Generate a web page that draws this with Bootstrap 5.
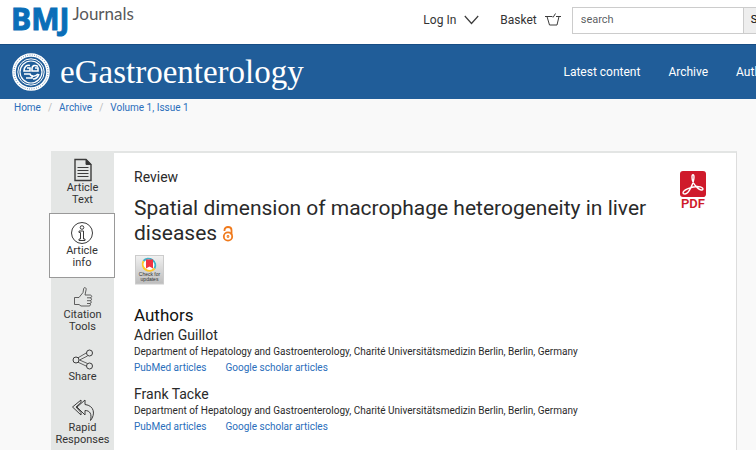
<!DOCTYPE html>
<html lang="en">
<head>
<meta charset="utf-8">
<meta name="viewport" content="width=device-width, initial-scale=1">
<title>eGastroenterology - Article info</title>
<link href="https://cdn.jsdelivr.net/npm/bootstrap@5.3.0/dist/css/bootstrap.min.css" rel="stylesheet">
<style>
body { font-family: Roboto, "Open Sans", sans-serif; background: #f9f9f9; color: #2a2a2a; font-size: 10px; line-height: 16px; }
a { color: #2a6ebb; text-decoration: none; }
svg { display: block; fill: none; stroke: #3c3c3c; flex-shrink: 0; }
.on-dark { stroke: #fff; }
.open-access { stroke: #f07a1c; }
.no-line { stroke: none; }
.brand-side { flex: 0 0 56%; padding-left: 11px; }
.topbar { min-height: 44px; }
.topbar .tool { color: #333; font-size: 12px; }
.tools { column-gap: 21px; }
.logo-mark { font: 700 30px/38px "Open Sans", sans-serif; color: #0a6eb8; -webkit-text-stroke: 1px #0a6eb8; }
.logo-sub { font: 17px/20px Lato, sans-serif; color: #58595b; padding: 4px 0 0 3px; }
.search-box { height: 27px; margin-left: -10px; }
.search-box input { width: 172px; flex: none; font-size: 11px; padding: 0 8px; border: 1px solid #ccc; border-radius: 0; }
.search-box button { background: #eee; border: 1px solid #ccc; border-left: 0; border-radius: 0; font-size: 11px; padding: 0 7px; }
.masthead { min-height: 55px; background: #205d99; border-top: 1px solid #174d84; }
.masthead a { color: #fff; font-size: 12px; }
.masthead .journal { flex: 0 0 74%; font: 33px/40px "Liberation Serif", serif; column-gap: 9px; }
.site-nav { column-gap: 28px; padding-left: 4px; }
.crumbs { --bs-breadcrumb-divider-color: #bbb; --bs-breadcrumb-item-padding-x: 7px; font-size: 10px; padding: 1px 14px 0; }
.article { margin: 35px 19px 0 49px; }
.tabs { width: 66px; position: relative; z-index: 1; margin-right: -2px; }
.tabs a { color: #333; font-size: 11px; line-height: 12px; min-height: 62px; padding-top: 7px; margin: 0 1px 0 2px; background: #e4e6e5; }
.tabs a.active { background: #fff; border: 1px solid #999; margin: 0; min-height: 65px; }
.tabs a.short { min-height: 51px; }
.tabs svg { height: 24px; }
.paper { background: #fff; border: 1px solid #ddd; border-top: 2px solid #e3e5e4; padding: 14px 20px; }
.kind { font-size: 14px; line-height: 20px; }
h1 { font-size: 21px; line-height: 25px; font-weight: 400; margin: 9px 0; }
h2 { font-size: 17px; line-height: 22px; font-weight: 400; margin: 19px 0 0; color: #111; }
h3 { font-size: 14px; line-height: 18px; font-weight: 400; margin: 0; }
.person { margin-bottom: 9px; }
.links { column-gap: 19px; }
.pdf { color: #cf1a2b; font-size: 13px; line-height: 14px; font-weight: 600; margin: 4px 10px 0; }
.tile-text { font: 5px "Liberation Sans", sans-serif; fill: #333; text-anchor: middle; }
</style>
<script src="https://cdn.jsdelivr.net/npm/bootstrap@5.3.0/dist/js/bootstrap.bundle.min.js"></script>
</head>
<body>
<div class="vh-100 d-flex flex-column overflow-hidden">
<header>
  <div class="topbar bg-white d-flex overflow-hidden">
    <div class="brand-side d-flex align-items-start">
      <a href="#" class="logo-mark">BMJ</a><a href="#" class="logo-sub">Journals</a>
    </div>
    <div class="tools d-flex align-items-center flex-nowrap pb-1">
      <button class="btn tool p-0 border-0 d-flex align-items-center text-nowrap gap-2" type="button">Log In
        <svg width="15" height="10" viewBox="0 0 15 10" stroke-width="1.2"><path d="M.8 1l6.7 7.5L14.2 1"/></svg></button>
      <a href="#" class="tool d-flex align-items-center gap-2">Basket
        <svg width="16" height="14" viewBox="0 0 16 14"><path d="M0 3.500h7.500M11 3.500h5M2 3.500l2.500 8.500h7.500l2-8.500M8 4.500L10.500.500"/></svg></a>
      <form class="search-box d-flex">
        <input type="search" class="form-control" placeholder="search" aria-label="search">
        <button type="submit">Search</button>
      </form>
    </div>
  </div>
  <div class="masthead d-flex align-items-center overflow-hidden">
    <a href="#" class="brand-side d-flex align-items-center journal">
      <svg class="on-dark" width="40" height="40" viewBox="0 0 40 40"><circle cx="20" cy="20" r="17" stroke-width="3.6"/><circle cx="20" cy="20" r="17" stroke="#205d99" stroke-width="1" stroke-dasharray=".7 1.6"/><circle cx="20" cy="20" r="13.2"/><circle cx="20" cy="20" r="11" stroke-width="1.2"/><path stroke-width="1.6" d="M19 13.500c-3.500-1-6 1.500-6 5.500h6v-3h-3M27 14.500c-3-2-6-1-6 2V19h6v-3h-3M13 22h6c1 3 5 3 8 0M15 26h6v-3M22 27c3 0 5-2 6-5"/></svg>
      eGastroenterology</a>
    <nav class="site-nav d-flex text-nowrap" aria-label="Main"><a class="nav-link p-0" href="#">Latest content</a><a class="nav-link p-0" href="#">Archive</a><a class="nav-link p-0" href="#">Authors</a></nav>
  </div>
</header>
<nav aria-label="breadcrumb">
  <ol class="breadcrumb crumbs mb-0">
    <li class="breadcrumb-item"><a href="#">Home</a></li>
    <li class="breadcrumb-item"><a href="#">Archive</a></li>
    <li class="breadcrumb-item"><a href="#">Volume 1, Issue 1</a></li>
  </ol>
</nav>
<main class="article d-flex flex-grow-1 align-items-stretch">
  <nav class="tabs flex-shrink-0 d-flex flex-column text-center" aria-label="Article">
    <a href="#" class="d-flex flex-column align-items-center"><svg width="18" viewBox="0 0 18 24"><path d="M1 1.500h11l5 5v16H1z" stroke-width="1.4"/><path d="M12 1.500v5h5z" fill="#333"/><path d="M3.500 9.500h11M3.500 12.500h11M3.500 15.500h11M3.500 18.500h11"/></svg><span>Article<br>Text</span></a>
    <a href="#" class="active d-flex flex-column align-items-center" aria-current="page"><svg width="24" viewBox="0 0 24 24"><circle cx="12" cy="12" r="10.500"/><circle cx="12" cy="6.500" r="1.800"/><path d="M9 10h4.500v8H15v1.500H9V18h1.500v-6.500H9z"/></svg><span>Article<br>info</span></a>
    <a href="#" class="d-flex flex-column align-items-center"><svg width="20" viewBox="0 0 20 24"><path d="M1.500 12.500H6l4-5 .7-4c.4-1.500 2.500-1 2.500.7L12 10h5c2.200 0 2.200 2.800.2 2.800 1.800.3 1.800 2.700 0 2.900 1.500.3 1.500 2.600-.3 2.800 1 .5.800 2.500-.8 2.500H8L6 19.500H1.500zM14 12.800h3M14 15.700h3M14 18.500h3" stroke-width=".8"/></svg><span>Citation<br>Tools</span></a>
    <a href="#" class="short d-flex flex-column align-items-center"><svg width="22" viewBox="0 0 22 24"><circle cx="4" cy="13" r="3"/><circle cx="17.500" cy="6" r="3"/><circle cx="17.500" cy="19" r="3"/><path d="M6 10.800l8.500-5M7.500 13l8-4M7.500 13l8 3.500M6 15.200l8.500 4" stroke-width=".8"/></svg><span>Share</span></a>
    <a href="#" class="d-flex flex-column align-items-center flex-grow-1"><svg width="24" viewBox="0 0 24 24"><path d="M10 2L1.500 9l8.500 8v-2.500L5 9l5-4.500zM14 2L6 9l8 8v-4.500c5 0 7 3.500 5.500 10 5-6 4-15-5.500-16z"/></svg><span>Rapid<br>Responses</span></a>
  </nav>
  <article class="paper flex-grow-1">
    <div class="d-flex justify-content-between align-items-start">
      <div>
        <div class="kind">Review</div>
        <h1>Spatial dimension of macrophage heterogeneity in liver diseases <svg class="open-access d-inline-block" width="12" height="16" viewBox="0 0 12 16" stroke-width="1.8" role="img" aria-label="Open access"><circle cx="6" cy="10.500" r="4.200"/><path d="M2.500 5V4c0-4 7-4 7 0v5"/><circle cx="6" cy="10.500" r=".5"/></svg></h1>
      </div>
      <a href="#" class="pdf text-center"><svg class="on-dark" width="26" height="26" viewBox="0 0 26 26"><rect width="26" height="26" rx="3" fill="#cf1a2b" stroke="none"/><path stroke-width="1.4" d="M3 22c0-3 7-6 14-6.500 6 0 7 3 5 3.500-3 .5-10-6-10-13 0-3 2-3 2 0 0 5-5 17-9 17-1 0-2-.5-2-1z"/></svg>PDF</a>
    </div>
    <a href="#" class="d-inline-block align-top" aria-label="Check for updates"><svg class="no-line" width="30" height="30" viewBox="0 0 30 30"><defs><linearGradient id="tile" x2="0" y2="1"><stop stop-color="#f1f1f1"/><stop offset="1" stop-color="#bdbdbd"/></linearGradient></defs><rect x="1.500" y=".5" width="28" height="28.500" fill="url(#tile)" stroke="#ccc"/><circle cx="15.500" cy="9" r="6.500" fill="#fff"/><path d="M9.500 6a6.700 6.700 0 0 1 11 7.500" fill="none" stroke="#3eb1c8" stroke-width="2"/><path d="M9.500 6a6.700 6.700 0 0 0 11 7.500" fill="none" stroke="#ffc72c" stroke-width="2"/><path d="M12 4.500h7v9l-3.500-2-3.500 2z" fill="#ef3340"/><text class="tile-text" x="15.500" y="21">Check for</text><text class="tile-text" x="15.500" y="26">updates</text></svg></a>
    <h2>Authors</h2>
    <section class="person">
      <h3>Adrien Guillot</h3>
      <div>Department of Hepatology and Gastroenterology, Charité Universitätsmedizin Berlin, Berlin, Germany</div>
      <div class="links d-flex"><a href="#">PubMed articles</a><a href="#">Google scholar articles</a></div>
    </section>
    <section class="person">
      <h3>Frank Tacke</h3>
      <div>Department of Hepatology and Gastroenterology, Charité Universitätsmedizin Berlin, Berlin, Germany</div>
      <div class="links d-flex"><a href="#">PubMed articles</a><a href="#">Google scholar articles</a></div>
    </section>
  </article>
</main>
</div>
</body>
</html>
